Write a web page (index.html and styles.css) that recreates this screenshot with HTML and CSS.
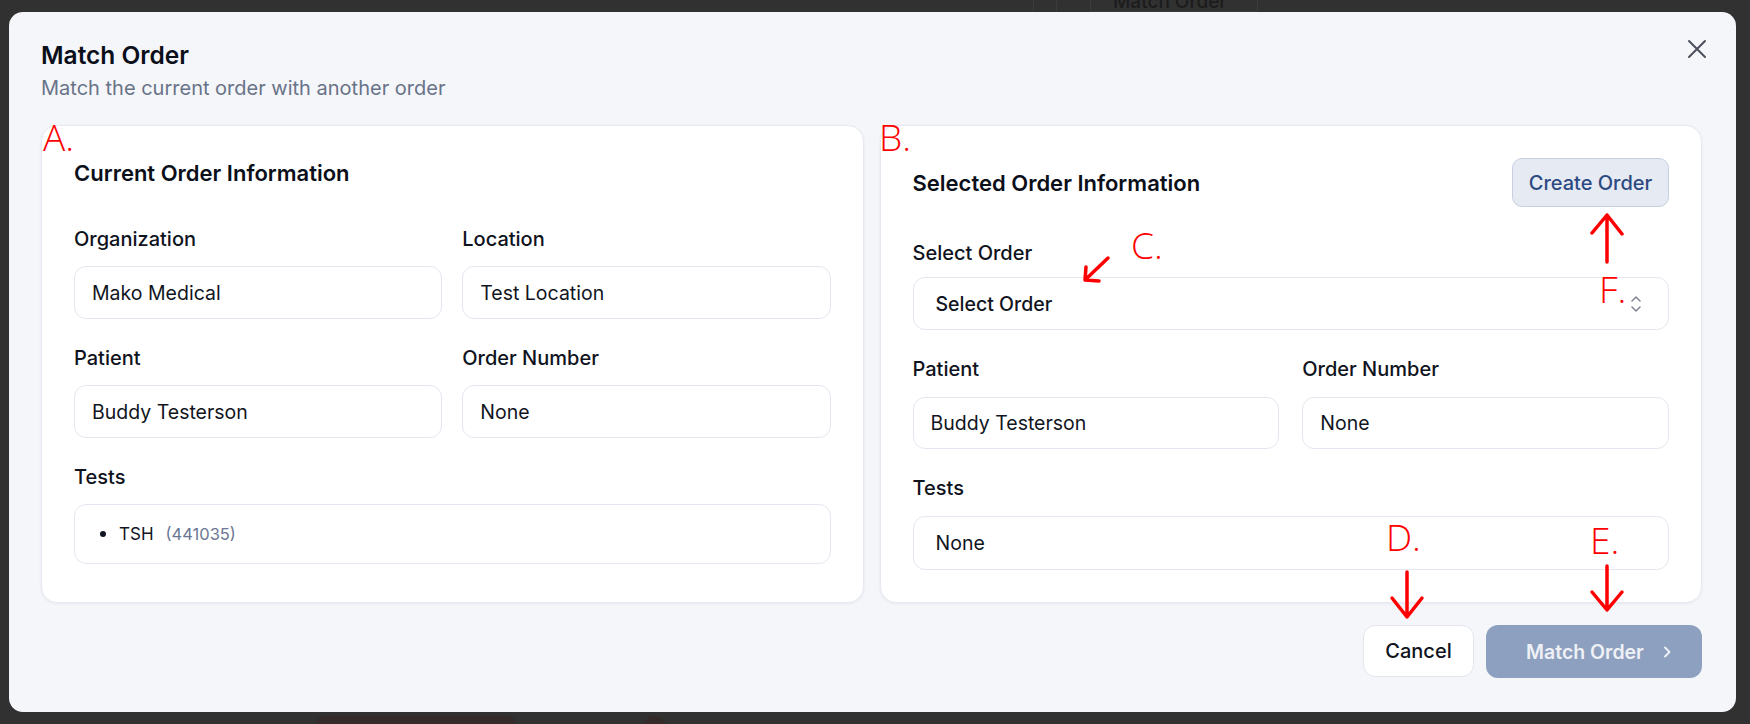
FILE: index.html
```html
<!DOCTYPE html>
<html lang="en">
<head>
<meta charset="utf-8">
<title>Match Order</title>
<link rel="stylesheet" href="styles.css">
</head>
<body>
<div class="backdrop">
  <span class="bg-line bg-line-1"></span>
  <span class="bg-line bg-line-2"></span>
  <span class="bg-box"></span>
  <span class="bg-title">Match Order</span>
  <span class="bg-blob bg-blob-1"></span>
  <span class="bg-blob bg-blob-2"></span>
</div>

<div class="modal" role="dialog">
  <button class="close" aria-label="Close">
    <svg width="20" height="20" viewBox="0 0 20 20"><path d="M2 2 L18 18 M18 2 L2 18" stroke="#4b505c" stroke-width="2" stroke-linecap="round" fill="none"/></svg>
  </button>

  <header class="modal-head">
    <h2 class="modal-title">Match Order</h2>
    <p class="modal-sub">Match the current order with another order</p>
  </header>

  <div class="cards">
    <section class="card card-current">
      <h3 class="card-title current-title">Current Order Information</h3>
      <div class="fields fields-left">
        <div class="field field-left">
          <span class="label">Organization</span>
          <div class="input">Mako Medical</div>
        </div>
        <div class="field field-left">
          <span class="label">Location</span>
          <div class="input">Test Location</div>
        </div>
        <div class="field field-left">
          <span class="label">Patient</span>
          <div class="input">Buddy Testerson</div>
        </div>
        <div class="field field-left">
          <span class="label">Order Number</span>
          <div class="input">None</div>
        </div>
        <div class="field field-left span2">
          <span class="label">Tests</span>
          <div class="input tests-left">
            <span class="dot"></span><span class="test-name">TSH</span><span class="test-code">(441035)</span>
          </div>
        </div>
      </div>
    </section>

    <section class="card card-selected">
      <div class="card-head">
        <h3 class="card-title">Selected Order Information</h3>
        <button class="btn-create">Create Order</button>
      </div>
      <div class="field field-select">
        <span class="label">Select Order</span>
        <div class="select">
          <span class="select-text">Select Order</span>
          <svg width="12" height="18" viewBox="0 0 12 18"><path d="M2 6 L6 2 L10 6 M2 12 L6 16 L10 12" stroke="#80848f" stroke-width="1.5" stroke-linecap="round" stroke-linejoin="round" fill="none"/></svg>
        </div>
      </div>
      <div class="fields fields-right">
        <div class="field field-right">
          <span class="label">Patient</span>
          <div class="input input-r">Buddy Testerson</div>
        </div>
        <div class="field field-right">
          <span class="label">Order Number</span>
          <div class="input input-r">None</div>
        </div>
        <div class="field field-right span2">
          <span class="label">Tests</span>
          <div class="input tests-right">None</div>
        </div>
      </div>
    </section>
  </div>

  <footer class="modal-foot">
    <button class="btn-cancel">Cancel</button>
    <button class="btn-match"><span>Match Order</span>
      <svg width="8" height="12" viewBox="0 0 8 12"><path d="M2 1.5 L6.5 6 L2 10.5" stroke="#eef1f6" stroke-width="1.8" stroke-linecap="round" stroke-linejoin="round" fill="none"/></svg>
    </button>
  </footer>
</div>

<span class="note note-a">A.</span>
<span class="note note-b">B.</span>
<span class="note note-c">C.</span>
<span class="note note-f">F.</span>
<span class="note note-d">D.</span>
<span class="note note-e">E.</span>
<svg class="arrows" width="1750" height="724" viewBox="0 0 1750 724">
  <g stroke="#ff0000" stroke-width="3.5" stroke-linecap="round" stroke-linejoin="round" fill="none">
    <path d="M1108 258 L1085 280 M1086 267 L1085 280 L1099 281"/>
    <path d="M1607 262 L1607 215 M1592 233 L1607 215 L1622 234"/>
    <path d="M1407 572 L1407 617 M1392 598 L1407 617 L1422 598"/>
    <path d="M1607 566 L1607 610 M1592 592 L1607 610 L1622 592"/>
  </g>
</svg>
</body>
</html>
```

FILE: styles.css
```css
* { box-sizing: border-box; }

html, body {
  margin: 0;
  padding: 0;
}

body {
  width: 1750px;
  height: 724px;
  overflow: hidden;
  background: #313131;
  font-family: "Inter", "Noto Sans", sans-serif;
  color: #0f1320;
  position: relative;
}

.backdrop {
  height: 724px;
}

.bg-line {
  position: absolute;
  top: 0;
  width: 1px;
  height: 12px;
  background: #3b3b3b;
}

.bg-line-1 { left: 1033px; }
.bg-line-2 { left: 1056px; }

.bg-box {
  position: absolute;
  left: 1090px;
  top: -20px;
  width: 168px;
  height: 32px;
  border: 1px solid #3b3b3b;
}

.bg-title {
  position: absolute;
  left: 1113px;
  top: -8px;
  font-size: 19px;
  line-height: 20px;
  font-weight: 500;
  color: #1c1c1c;
}

.bg-blob {
  position: absolute;
  top: 716px;
  height: 20px;
  background: #352a2a;
  border-radius: 8px;
}

.bg-blob-1 { left: 316px; width: 200px; }
.bg-blob-2 { left: 643px; width: 23px; border-radius: 50%; }

.modal {
  position: absolute;
  left: 9px;
  top: 12px;
  width: 1727px;
  height: 700px;
  background: #f5f6fa;
  border-radius: 14px;
  padding: 29px 34px 33px 32px;
  display: flex;
  flex-direction: column;
}

.close {
  position: absolute;
  top: 27px;
  right: 29px;
  width: 20px;
  height: 20px;
  padding: 0;
  border: 0;
  background: transparent;
  display: flex;
}

.modal-title {
  margin: 0;
  font-size: 24.5px;
  line-height: 28px;
  font-weight: 600;
  color: #0b0f1a;
}

.modal-sub {
  margin: 7px 0 0;
  font-size: 20px;
  line-height: 24px;
  color: #687388;
}

.cards {
  margin-top: 25px;
  display: grid;
  grid-template-columns: 1fr 1fr;
  gap: 16px;
}

.card {
  background: #ffffff;
  border: 1px solid #e6e9f0;
  border-radius: 16px;
  padding: 32px;
  box-shadow: 0 1px 3px rgba(20, 30, 60, 0.06);
}

.card-title {
  margin: 0;
  font-size: 22px;
  line-height: 30px;
  font-weight: 600;
  color: #0b0f1a;
}

.current-title {
  margin-bottom: 39px;
}

.fields {
  display: grid;
  grid-template-columns: 1fr 1fr;
  row-gap: 27px;
}

.fields-left { column-gap: 20px; }
.fields-right { column-gap: 23px; margin-top: 27px; }

.span2 { grid-column: 1 / -1; }

.field {
  display: flex;
  flex-direction: column;
}

.field-left { gap: 15px; }
.field-right { gap: 16px; }
.field-select { gap: 12px; }

.label {
  font-size: 20px;
  line-height: 24px;
  font-weight: 500;
  color: #0f1320;
}

.input {
  height: 53px;
  border: 1px solid #e4e7ef;
  border-radius: 12px;
  background: #ffffff;
  padding: 0 17px;
  display: flex;
  align-items: center;
  font-size: 19.5px;
  color: #111522;
}

.input-r { height: 52px; }

.tests-left {
  height: 60px;
  padding-left: 25px;
}

.dot {
  width: 6px;
  height: 6px;
  border-radius: 50%;
  background: #111522;
  margin-right: 13px;
}

.test-name {
  font-size: 17px;
}

.test-code {
  margin-left: 12px;
  font-size: 16.5px;
  color: #6b7793;
}

.tests-right {
  height: 54px;
  padding-left: 22px;
}

.card-head {
  height: 49px;
  display: flex;
  align-items: center;
  justify-content: space-between;
  margin-bottom: 34px;
}

.btn-create {
  height: 49px;
  width: 157px;
  padding: 0;
  border: 1px solid #c7cfdf;
  border-radius: 10px;
  background: #e6eaf2;
  font-family: inherit;
  font-size: 20px;
  font-weight: 500;
  color: #2c4a82;
}

.select {
  height: 53px;
  border: 1px solid #e4e7ef;
  border-radius: 12px;
  background: #ffffff;
  padding: 0 26px 0 22px;
  display: flex;
  align-items: center;
  justify-content: space-between;
}

.select-text {
  font-size: 19.5px;
  font-weight: 500;
  color: #111522;
}

.modal-foot {
  margin-top: 22px;
  display: flex;
  justify-content: flex-end;
  gap: 12px;
}

.btn-cancel {
  height: 52px;
  width: 111px;
  padding: 0;
  border: 1px solid #e2e5ee;
  border-radius: 12px;
  background: #ffffff;
  font-family: inherit;
  font-size: 20px;
  font-weight: 500;
  color: #0f1320;
}

.btn-match {
  height: 53px;
  width: 216px;
  border: 0;
  border-radius: 12px;
  background: #8ea0bf;
  font-family: inherit;
  font-size: 19.5px;
  font-weight: 600;
  color: #eef1f6;
  display: flex;
  align-items: center;
  justify-content: flex-start;
  gap: 19px;
  padding: 0 0 0 40px;
}

.note {
  position: absolute;
  font-family: "Open Sans", "Liberation Sans", sans-serif;
  font-weight: 300;
  font-size: 37px;
  line-height: 37px;
  color: #ff0000;
}

.note-a { left: 43px; top: 118px; }
.note-b { left: 879px; top: 118px; }
.note-c { left: 1131px; top: 226px; }
.note-f { left: 1599px; top: 270px; }
.note-d { left: 1386px; top: 518px; }
.note-e { left: 1590px; top: 521px; }

.arrows {
  position: absolute;
  left: 0;
  top: 0;
  pointer-events: none;
}
```
